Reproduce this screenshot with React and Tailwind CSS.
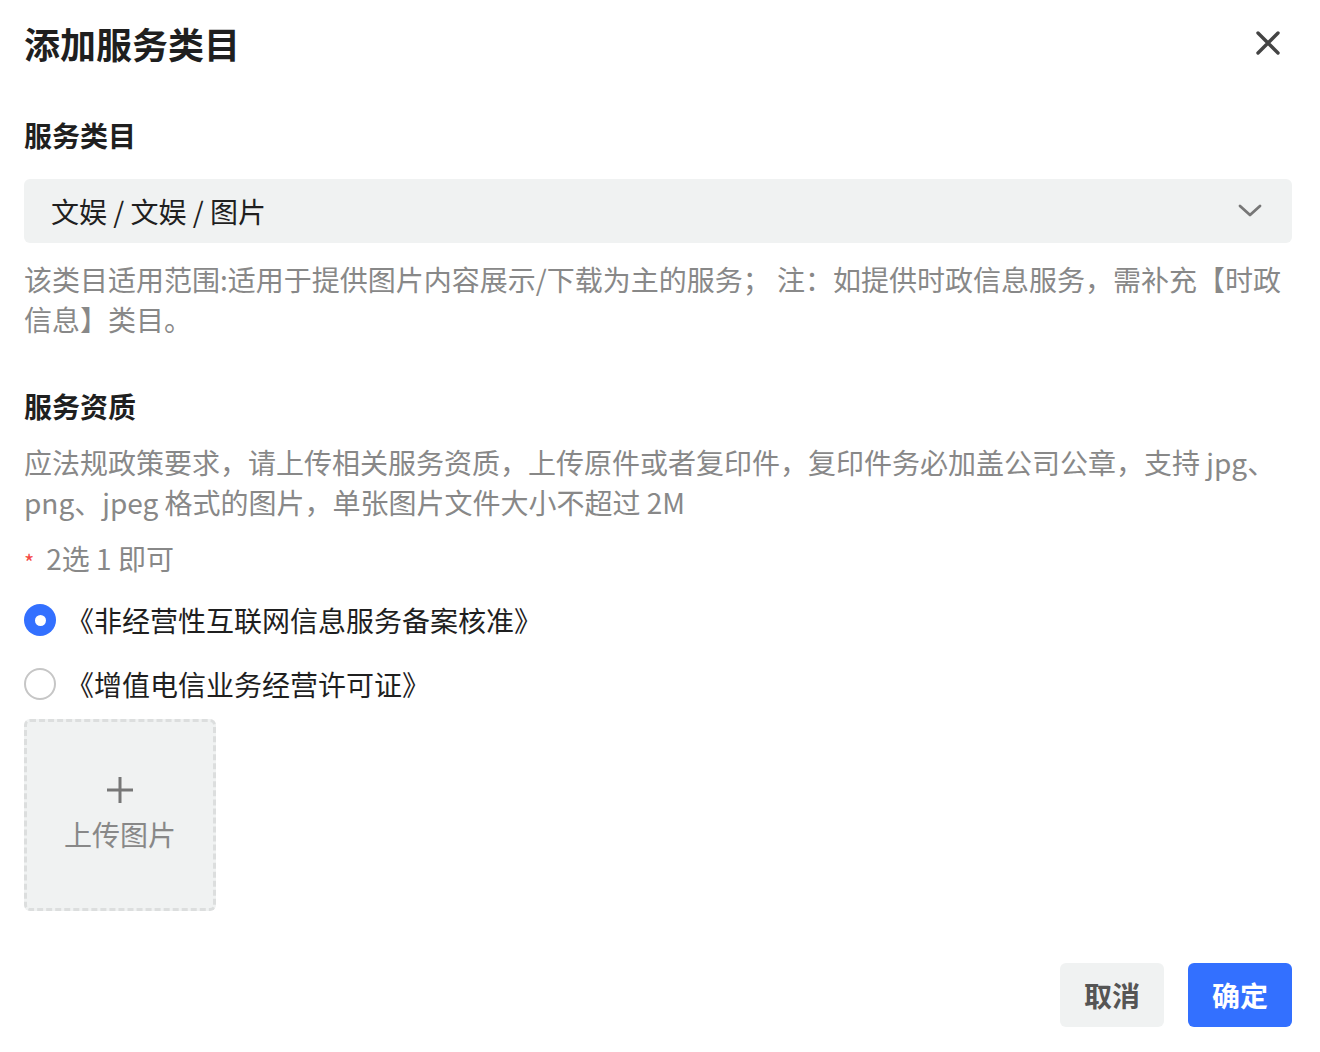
import { useState } from 'react'

const FONT = { fontFamily: '"Noto Sans CJK SC", "Noto Sans", sans-serif' }

function Radio({ checked, label, onClick }) {
  return (
    <div className="flex items-center h-10 gap-[10px] cursor-pointer" onClick={onClick}>
      {checked ? (
        <span className="w-8 h-8 rounded-full bg-[#3370ff] flex items-center justify-center">
          <span className="w-[11px] h-[11px] rounded-full bg-white" />
        </span>
      ) : (
        <span className="w-8 h-8 rounded-full border-2 border-[#c6c6c6] bg-white" />
      )}
      <span className="text-[28px] leading-10 text-[#1f1f1f]">{label}</span>
    </div>
  )
}

export default function App() {
  const [cert, setCert] = useState(0)

  return (
    <div className="w-[1320px] h-[1052px] bg-white pl-6 pr-7" style={FONT}>
      {/* Header */}
      <div className="h-[85px] flex items-center justify-between">
        <h1 className="text-[36px] font-semibold text-[#1f1f1f] leading-none">添加服务类目</h1>
        <svg width="24" height="24" viewBox="0 0 24 24" className="mr-[12px]">
          <path d="M2 2L22 22M22 2L2 22" stroke="#444" strokeWidth="3.4" strokeLinecap="round" />
        </svg>
      </div>

      {/* Category */}
      <div className="mt-[30px] text-[28px] leading-10 font-semibold text-[#1f1f1f]">服务类目</div>
      <div className="mt-6 h-16 rounded-md bg-[#f0f2f2] flex items-center justify-between pl-[27px] pr-[30px]">
        <span className="text-[28px] text-[#1f1f1f]">文娱 / 文娱 / 图片</span>
        <svg width="24" height="14" viewBox="0 0 24 14">
          <path d="M2 2L12 11L22 2" fill="none" stroke="#777" strokeWidth="2.8" strokeLinecap="round" strokeLinejoin="round" />
        </svg>
      </div>
      <p className="mt-[16px] text-[28px] leading-10 text-[#888]">
        该类目适用范围:适用于提供图片内容展示/下载为主的服务； 注：如提供时政信息服务，需补充【时政信息】类目。
      </p>

      {/* Qualification */}
      <div className="mt-[47px] text-[28px] leading-10 font-semibold text-[#1f1f1f]">服务资质</div>
      <p className="mt-4 text-[28px] leading-10 text-[#888]">
        应法规政策要求，请上传相关服务资质，上传原件或者复印件，复印件务必加盖公司公章，支持 jpg、png、jpeg 格式的图片，单张图片文件大小不超过 2M
      </p>
      <div className="mt-4 text-[28px] leading-10 text-[#888] flex items-center">
        <span className="text-[#f54a45] text-[22px] leading-none mt-[6px] mr-3">*</span>
        <span>2选 1 即可</span>
      </div>

      <div className="mt-[22px] flex flex-col gap-6">
        <Radio checked={cert === 0} label="《非经营性互联网信息服务备案核准》" onClick={() => setCert(0)} />
        <Radio checked={cert === 1} label="《增值电信业务经营许可证》" onClick={() => setCert(1)} />
      </div>

      {/* Upload */}
      <div className="mt-[15px] w-[192px] h-[192px] rounded-md border-[3px] border-dashed border-[#dcdede] bg-[#f0f2f2] flex flex-col items-center justify-center">
        <svg width="28" height="28" viewBox="0 0 28 28">
          <path d="M14 1V27M1 14H27" stroke="#777" strokeWidth="3" />
        </svg>
        <span className="mt-[10px] text-[28px] leading-10 text-[#888]">上传图片</span>
      </div>

      {/* Footer */}
      <div className="mt-[52px] flex justify-end gap-6">
        <button className="w-[104px] h-16 rounded-md bg-[#f0f2f2] text-[28px] font-semibold text-[#555]">取消</button>
        <button className="w-[104px] h-16 rounded-md bg-[#3370ff] text-[28px] font-semibold text-white">确定</button>
      </div>
    </div>
  )
}
